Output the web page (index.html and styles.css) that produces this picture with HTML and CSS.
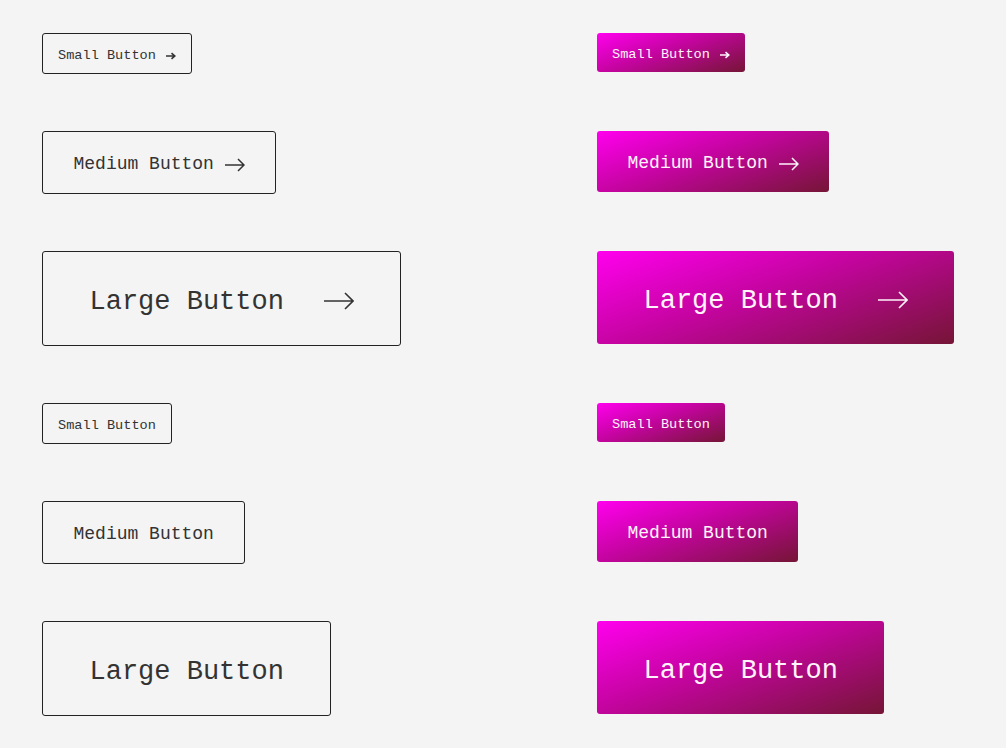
FILE: index.html
```html
<!DOCTYPE html>
<html lang="en">
<head>
<meta charset="utf-8">
<title>Buttons</title>
<link rel="stylesheet" href="styles.css">
</head>
<body>
<main class="grid">
  <button class="btn outline sm">Small Button<svg class="arrow a-sm" viewBox="0 0 10 8"><path d="M0 4H8.5M5.5 1.2L8.8 4L5.5 6.8" fill="none" stroke="currentColor" stroke-width="1.6"/></svg></button>
  <button class="btn filled sm">Small Button<svg class="arrow a-sm" viewBox="0 0 10 8"><path d="M0 4H8.5M5.5 1.2L8.8 4L5.5 6.8" fill="none" stroke="currentColor" stroke-width="1.6"/></svg></button>

  <button class="btn outline md">Medium Button<svg class="arrow a-md" viewBox="0 0 20 14"><path d="M0 7H19M13 1L19 7L13 13" fill="none" stroke="currentColor" stroke-width="1.5"/></svg></button>
  <button class="btn filled md">Medium Button<svg class="arrow a-md" viewBox="0 0 20 14"><path d="M0 7H19M13 1L19 7L13 13" fill="none" stroke="currentColor" stroke-width="1.5"/></svg></button>

  <button class="btn outline lg">Large Button<svg class="arrow a-lg" viewBox="0 0 30 18"><path d="M0 9H29M21 1L29 9L21 17" fill="none" stroke="currentColor" stroke-width="1.6"/></svg></button>
  <button class="btn filled lg">Large Button<svg class="arrow a-lg" viewBox="0 0 30 18"><path d="M0 9H29M21 1L29 9L21 17" fill="none" stroke="currentColor" stroke-width="1.6"/></svg></button>

  <button class="btn outline sm">Small Button</button>
  <button class="btn filled sm">Small Button</button>

  <button class="btn outline md">Medium Button</button>
  <button class="btn filled md">Medium Button</button>

  <button class="btn outline lg">Large Button</button>
  <button class="btn filled lg">Large Button</button>
</main>
</body>
</html>
```

FILE: styles.css
```css
html, body {
  margin: 0;
  background: #f4f4f4;
}

.grid {
  display: grid;
  grid-template-columns: 555px auto;
  row-gap: 57px;
  padding: 33px 42px;
  align-items: start;
  justify-items: start;
}

.btn {
  display: inline-flex;
  align-items: center;
  margin: 0;
  font-family: "Liberation Mono", "DejaVu Sans Mono", monospace;
  font-weight: normal;
  border-radius: 3px;
  cursor: pointer;
  white-space: nowrap;
}

.outline {
  background: transparent;
  border: 1px solid #222;
  color: #333;
}

.filled {
  border: none;
  color: #fff4fb;
  background: linear-gradient(160deg, #ff00ee 0%, #c4049f 45%, #751536 100%);
}

.sm {
  font-size: 13.6px;
  line-height: 19px;
  padding: 12px 15px 8px;
}

.md {
  font-size: 18px;
  line-height: 27px;
  padding: 19px 30.5px 15px;
}

.lg {
  font-size: 27px;
  line-height: 41px;
  padding: 30px 46.5px 22px;
}

.arrow {
  display: block;
  flex: none;
}

.a-sm {
  width: 10px;
  height: 8px;
  margin-left: 10px;
}

.a-md {
  width: 20px;
  height: 14px;
  margin-left: 11px;
}

.a-lg {
  width: 30px;
  height: 18px;
  margin-left: 40px;
  margin-bottom: 4px;
}
```
